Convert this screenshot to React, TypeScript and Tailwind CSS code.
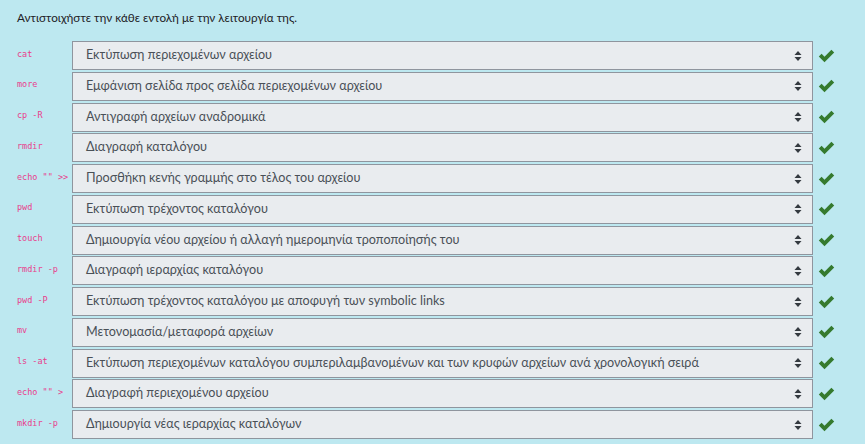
import React from 'react';

const rows: [string, string][] = [
  ['cat', 'Εκτύπωση περιεχομένων αρχείου'],
  ['more', 'Εμφάνιση σελίδα προς σελίδα περιεχομένων αρχείου'],
  ['cp -R', 'Αντιγραφή αρχείων αναδρομικά'],
  ['rmdir', 'Διαγραφή καταλόγου'],
  ['echo "" >>', 'Προσθήκη κενής γραμμής στο τέλος του αρχείου'],
  ['pwd', 'Εκτύπωση τρέχοντος καταλόγου'],
  ['touch', 'Δημιουργία νέου αρχείου ή αλλαγή ημερομηνία τροποποίησής του'],
  ['rmdir -p', 'Διαγραφή ιεραρχίας καταλόγου'],
  ['pwd -P', 'Εκτύπωση τρέχοντος καταλόγου με αποφυγή των symbolic links'],
  ['mv', 'Μετονομασία/μεταφορά αρχείων'],
  ['ls -at', 'Εκτύπωση περιεχομένων καταλόγου συμπεριλαμβανομένων και των κρυφών αρχείων ανά χρονολογική σειρά'],
  ['echo "" >', 'Διαγραφή περιεχομένου αρχείου'],
  ['mkdir -p', 'Δημιουργία νέας ιεραρχίας καταλόγων'],
];

function Updown() {
  return (
    <svg width="8" height="12" viewBox="0 0 8 12" className="shrink-0">
      <path d="M4 1 L7.5 5 L0.5 5 Z" fill="#343a40" />
      <path d="M4 11 L7.5 7 L0.5 7 Z" fill="#343a40" />
    </svg>
  );
}

function Check() {
  return (
    <svg width="17" height="14" viewBox="0 0 17 14" className="shrink-0">
      <path d="M0.8 7.6 L3.6 4.8 L6.5 7.7 L13.4 0.8 L16.2 3.6 L6.5 13.3 Z" fill="#357a2e" />
    </svg>
  );
}

export default function App() {
  return (
    <div className="min-h-screen w-full bg-[#bde8f0] font-['Lato',sans-serif] pl-[17px] pt-[7px]">
      <p className="text-[11.7px] leading-[20px] text-[#1d2125]">
        Αντιστοιχήστε την κάθε εντολή με την λειτουργία της.
      </p>
      <div className="mt-[14px] flex flex-col gap-[1.75px]">
        {rows.map(([cmd, label]) => (
          <div key={cmd} className="flex items-center h-[29px]">
            <div className="w-[55px] shrink-0 -mt-[3px] font-['DejaVu_Sans_Mono',monospace] text-[8.5px] text-[#e83e8c] whitespace-pre">
              {cmd}
            </div>
            <div className="flex items-center justify-between h-full w-[741px] border border-[#8f959e] bg-[#e9ecef] pl-[13px] pr-[10px]">
              <span className="text-[12.6px] text-[#495057] whitespace-nowrap">{label}</span>
              <Updown />
            </div>
            <div className="ml-[5px]">
              <Check />
            </div>
          </div>
        ))}
      </div>
    </div>
  );
}
